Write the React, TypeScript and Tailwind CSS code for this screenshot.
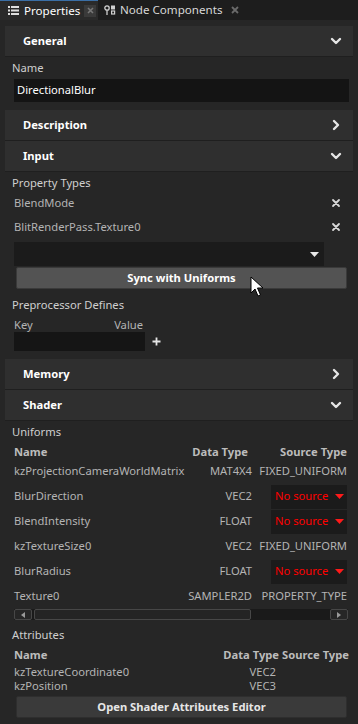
import React from "react";

const font = { fontFamily: '"Noto Sans", "Open Sans", sans-serif' };

function Chevron({ dir }: { dir: "down" | "right" }) {
  return (
    <svg width="12" height="12" viewBox="0 0 12 12" className="shrink-0">
      {dir === "down" ? (
        <path d="M2 4 L6 8 L10 4" stroke="#e6e6e6" strokeWidth="2.4" fill="none" strokeLinecap="round" strokeLinejoin="round" />
      ) : (
        <path d="M4 2 L8 6 L4 10" stroke="#e6e6e6" strokeWidth="2.4" fill="none" strokeLinecap="round" strokeLinejoin="round" />
      )}
    </svg>
  );
}

function SectionHeader({ title, open }: { title: string; open: boolean }) {
  return (
    <div className="mx-[5px] h-[31px] bg-[#2f2f2f] flex items-center justify-between pl-[18px] pr-[11px] border-b border-[#1f1f1f]">
      <span className="text-[11.2px] font-bold text-white">{title}</span>
      <Chevron dir={open ? "down" : "right"} />
    </div>
  );
}

function XIcon() {
  return (
    <svg width="10" height="10" viewBox="0 0 10 10">
      <path d="M2 2 L8 8 M8 2 L2 8" stroke="#d8d8d8" strokeWidth="1.8" strokeLinecap="round" />
    </svg>
  );
}

function Caret({ color }: { color: string }) {
  return (
    <svg width="9" height="5" viewBox="0 0 9 5">
      <path d="M0 0 L9 0 L4.5 5 Z" fill={color} />
    </svg>
  );
}

function NoSource() {
  return (
    <div className="w-[76px] h-[24px] bg-[#1b1b1b] flex items-center justify-between pl-[4px] pr-[3px]">
      <span className="text-[11.2px] text-[#ff0000]">No source</span>
      <Caret color="#ff1a1a" />
    </div>
  );
}

const uniforms: { name: string; type: string; source: string | null; h: number; pb: number }[] = [
  { name: "kzProjectionCameraWorldMatrix", type: "MAT4X4", source: "FIXED_UNIFORM", h: 22, pb: 4 },
  { name: "BlurDirection", type: "VEC2", source: null, h: 25, pb: 0 },
  { name: "BlendIntensity", type: "FLOAT", source: null, h: 25, pb: 0 },
  { name: "kzTextureSize0", type: "VEC2", source: "FIXED_UNIFORM", h: 25, pb: 0 },
  { name: "BlurRadius", type: "FLOAT", source: null, h: 25, pb: 0 },
  { name: "Texture0", type: "SAMPLER2D", source: "PROPERTY_TYPE", h: 25, pb: 0 },
];

export default function App() {
  return (
    <div className="w-[358px] h-[724px] bg-[#262626] overflow-hidden relative select-none text-[11.2px]" style={font}>
      {/* Tab bar */}
      <div className="h-[20px] bg-[#1d1d1d] flex items-stretch">
        <div className="w-[98px] bg-[#2a2a2a] flex items-center pl-[8px] border-t border-[#3a6ea5]">
          <svg width="11" height="9" viewBox="0 0 11 9" className="mr-[5px]">
            <rect x="0" y="0" width="2" height="2" fill="#e0e0e0" />
            <rect x="3" y="0" width="8" height="2" fill="#e0e0e0" />
            <rect x="0" y="3.5" width="2" height="2" fill="#e0e0e0" />
            <rect x="3" y="3.5" width="8" height="2" fill="#e0e0e0" />
            <rect x="0" y="7" width="2" height="2" fill="#e0e0e0" />
            <rect x="3" y="7" width="8" height="2" fill="#e0e0e0" />
          </svg>
          <span className="text-[11.6px] text-white leading-none">Properties</span>
          <div className="ml-auto mr-[2px] w-[12px] h-[12px] bg-[#3a3a3a] flex items-center justify-center">
            <svg width="7" height="7" viewBox="0 0 7 7">
              <path d="M1 1 L6 6 M6 1 L1 6" stroke="#777" strokeWidth="1.6" />
            </svg>
          </div>
        </div>
        <div className="flex items-center pl-[6px]">
          <svg width="12" height="11" viewBox="0 0 12 11" className="mr-[4px]">
            <circle cx="3" cy="3" r="2.2" stroke="#d0d0d0" strokeWidth="1.3" fill="none" />
            <line x1="3" y1="5.2" x2="3" y2="10" stroke="#d0d0d0" strokeWidth="1.3" />
            <rect x="7" y="0.5" width="4" height="4" fill="#d0d0d0" />
            <rect x="7.6" y="6" width="3" height="3" stroke="#d0d0d0" strokeWidth="1.2" fill="none" />
          </svg>
          <span className="text-[11.6px] text-[#d8d8d8] leading-none">Node Components</span>
          <svg width="8" height="8" viewBox="0 0 8 8" className="ml-[9px]">
            <path d="M1 1 L7 7 M7 1 L1 7" stroke="#6a6a6a" strokeWidth="1.8" />
          </svg>
        </div>
      </div>

      <div className="pt-[6px]">
        <SectionHeader title="General" open />
        <div className="px-[12px] pt-[2px] pb-[8px]">
          <div className="text-[#cfcfcf] h-[18px] leading-[18px]">Name</div>
          <div className="mt-[2px] ml-[2px] mr-[-3px] h-[23px] bg-[#141414] flex items-center pl-[3px]">
            <span className="text-white">DirectionalBlur</span>
          </div>
        </div>
        <SectionHeader title="Description" open={false} />
        <SectionHeader title="Input" open />
        <div className="px-[12px] pt-[3px] pb-[8px]">
          <div className="text-[#cfcfcf] h-[16px] leading-[16px]">Property Types</div>
          <div className="ml-[2px] h-[24px] flex items-center justify-between pr-[5px]">
            <span className="text-[#b4b4b4]">BlendMode</span>
            <XIcon />
          </div>
          <div className="ml-[2px] h-[24px] flex items-center justify-between pr-[5px]">
            <span className="text-[#b4b4b4]">BlitRenderPass.Texture0</span>
            <XIcon />
          </div>
          <div className="mt-[3px] ml-[2px] w-[310px] h-[24px] bg-[#1b1b1b] flex items-center justify-end pr-[5px]">
            <Caret color="#e8e8e8" />
          </div>
          <div className="mt-[1px] ml-[4px] mr-[-1px] h-[22px] bg-[#535353] border border-[#3a3a3a] rounded-[2px] flex items-center justify-center">
            <span className="font-bold text-white">Sync with Uniforms</span>
          </div>
          <div className="mt-[8px] text-[#cfcfcf] h-[16px] leading-[16px]">Preprocessor Defines</div>
          <div className="mt-[5px] ml-[2px] w-[129px] h-[14px] flex items-center justify-between text-[#b4b4b4]">
            <span>Key</span>
            <span>Value</span>
          </div>
          <div className="ml-[2px] flex items-center h-[19px]">
            <div className="w-[131px] h-[19px] bg-[#151515]" />
            <svg width="9" height="9" viewBox="0 0 9 9" className="ml-[7px]">
              <path d="M4.5 0.5 V8.5 M0.5 4.5 H8.5" stroke="#e6e6e6" strokeWidth="1.8" />
            </svg>
          </div>
        </div>
        <SectionHeader title="Memory" open={false} />
        <SectionHeader title="Shader" open />
        <div className="px-[12px] pt-[3px]">
          <div className="text-[#cfcfcf] h-[16px] leading-[16px]">Uniforms</div>
          <div className="mt-[2px] ml-[2px] mr-[-1px] h-[20px] flex items-center font-bold text-[#bcbcbc]">
            <span className="flex-1 min-w-0">Name</span>
            <span className="w-[80px] shrink-0 text-right pr-[4px]">Data Type</span>
            <span className="w-[95px] shrink-0 text-right">Source Type</span>
          </div>
          {uniforms.map((u) => (
            <div
              key={u.name}
              className="ml-[2px] mr-[-1px] flex items-center text-[#b4b4b4]"
              style={{ height: u.h, paddingBottom: u.pb }}
            >
              <span className="flex-1 min-w-0 whitespace-nowrap">{u.name}</span>
              <span className="w-[80px] shrink-0 text-right whitespace-nowrap">{u.type}</span>
              <span className="w-[95px] shrink-0 flex justify-end whitespace-nowrap">
                {u.source ? u.source : <NoSource />}
              </span>
            </div>
          ))}
          {/* Scrollbar */}
          <div className="ml-[2px] mr-[-2px] h-[11px] bg-[#1a1a1a] flex items-stretch">
            <div className="w-[18px] border border-[#474747] rounded-[2px] bg-[#262626] flex items-center justify-center">
              <svg width="4" height="6" viewBox="0 0 4 6"><path d="M4 0 L0 3 L4 6 Z" fill="#9a9a9a" /></svg>
            </div>
            <div className="ml-[2px] w-[217px] border border-[#474747] rounded-[2px] bg-[#242424]" />
            <div className="flex-1" />
            <div className="w-[18px] border border-[#474747] rounded-[2px] bg-[#262626] flex items-center justify-center">
              <svg width="4" height="6" viewBox="0 0 4 6"><path d="M0 0 L4 3 L0 6 Z" fill="#9a9a9a" /></svg>
            </div>
          </div>
          <div className="mt-[7px] text-[#cfcfcf] h-[16px] leading-[16px]">Attributes</div>
          <div className="mt-[4px] ml-[2px] mr-[-3px] h-[16px] flex items-center font-bold text-[#bcbcbc]">
            <span className="flex-1">Name</span>
            <span className="whitespace-nowrap">Data Type</span>
            <span className="ml-[3px] whitespace-nowrap">Source Type</span>
          </div>
          {[
            ["kzTextureCoordinate0", "VEC2"],
            ["kzPosition", "VEC3"],
          ].map(([n, t], i) => (
            <div
              key={n}
              className={`ml-[2px] h-[14px] flex items-center text-[#b4b4b4] ${i === 0 ? "mt-[2px]" : ""}`}
            >
              <span className="flex-1">{n}</span>
              <span className="w-[40px] text-right mr-[70px]">{t}</span>
            </div>
          ))}
          <div className="mt-[3px] ml-[4px] mr-[-1px] h-[22px] bg-[#3a3a3a] border border-[#2e2e2e] rounded-[2px] flex items-center justify-center">
            <span className="font-bold text-[#e6e6e6]">Open Shader Attributes Editor</span>
          </div>
        </div>
      </div>

      {/* Mouse cursor */}
      <svg width="14" height="22" viewBox="0 0 14 22" className="absolute left-[250px] top-[276px]">
        <path d="M1 1 L1 17 L5 13 L8 20 L10.5 19 L7.5 12 L13 12 Z" fill="#ffffff" stroke="#000" strokeWidth="1" strokeLinejoin="round" />
      </svg>
    </div>
  );
}
